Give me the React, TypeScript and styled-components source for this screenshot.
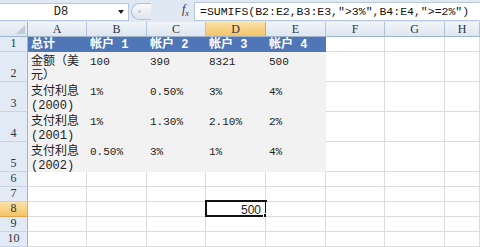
import React from "react";
import styled, { createGlobalStyle } from "styled-components";

const GlobalStyle = createGlobalStyle`
  html, body {
    margin: 0;
    padding: 0;
    background: #ffffff;
    overflow: hidden;
  }
`;

const Page = styled.div`
  width: 480px;
  height: 247px;
  display: flex;
  flex-direction: column;
  overflow: hidden;
`;

const FormulaBar = styled.div`
  height: 22px;
  display: flex;
  align-items: center;
  background: #dfe8f3;
  box-sizing: border-box;
  padding-top: 1px;
`;

const NameBox = styled.div`
  width: 129px;
  height: 18px;
  box-sizing: border-box;
  background: #ffffff;
  border: 1px solid #b7c8dd;
  border-left: none;
  display: flex;
  align-items: center;
  font: 12px/16px "Liberation Mono", monospace;
  color: #222;
`;

const NameText = styled.span`
  flex: 1;
  text-align: center;
  padding-left: 4px;
`;

const DropArrow = styled.span`
  width: 0;
  height: 0;
  margin-right: 4px;
  border-left: 3px solid transparent;
  border-right: 3px solid transparent;
  border-top: 4px solid #222;
`;

const Splitter = styled.div`
  width: 20px;
  height: 17px;
  margin-left: 2px;
  box-sizing: border-box;
  border: 1px solid #b3c1d3;
  border-right: none;
  border-radius: 9px 0 0 9px;
  background: linear-gradient(#f7f9fc, #dfe6ef);
  display: flex;
  align-items: center;
  padding-left: 6px;

  &::before {
    content: "";
    width: 3px;
    height: 3px;
    border-radius: 50%;
    background: #c3ccd8;
  }
`;

const FxLabel = styled.span`
  margin-left: 31px;
  width: 11px;
  font: italic 12px/16px "Liberation Serif", serif;
  color: #333;
  sub {
    font-size: 8px;
  }
`;

const FormulaInput = styled.div`
  flex: 1;
  height: 19px;
  margin-left: 1px;
  box-sizing: border-box;
  background: #ffffff;
  border: 1px solid #b7c8dd;
  border-right: none;
  padding-left: 5px;
  font: 11.5px/17px "Liberation Mono", monospace;
  color: #111;
  white-space: nowrap;
`;

const Sheet = styled.div`
  flex: 1;
  display: grid;
  grid-template-columns: 28px 59px 60px 59px 60px 60px 59px 60px 1fr;
  grid-template-rows: 15px 15px 30px 30px 30px 30px 15px 15px 15px 15px 15px;
`;

const Corner = styled.div`
  position: relative;
  box-sizing: border-box;
  background: linear-gradient(#eef3f9, #dce5f0);
  border-right: 1px solid #9fb3cb;
  border-bottom: 1px solid #9fb3cb;

  &::after {
    content: "";
    position: absolute;
    right: 2px;
    bottom: 2px;
    border-left: 9px solid transparent;
    border-bottom: 9px solid #bfcbd9;
  }
`;

const ColHead = styled.div<{ active?: boolean }>`
  box-sizing: border-box;
  display: flex;
  align-items: center;
  justify-content: center;
  background: ${(p) =>
    p.active
      ? "linear-gradient(#fbe2a8, #f3c469)"
      : "linear-gradient(#f1f5fa, #dde6f0)"};
  border-right: 1px solid ${(p) => (p.active ? "#e2a74a" : "#b0c2d6")};
  border-bottom: 1px solid #9fb3cb;
  font: 12px/14px "Liberation Serif", serif;
  color: #2b3440;
`;

const RowHead = styled.div<{ active?: boolean }>`
  box-sizing: border-box;
  display: flex;
  align-items: flex-end;
  justify-content: center;
  padding-bottom: 1px;
  background: ${(p) =>
    p.active ? "linear-gradient(#fbe2a8, #f3c469)" : "#e1eaf5"};
  border-right: 1px solid #9fb3cb;
  border-bottom: 1px solid ${(p) => (p.active ? "#e2a74a" : "#c6d4e4")};
  font: 12px/14px "Liberation Serif", serif;
  color: #2b3440;
`;

type CellKind = "head" | "fill" | "plain";

const cellColor = (kind: CellKind) =>
  kind === "head" ? "#4f76b6" : kind === "fill" ? "#f2f2f2" : "#ffffff";

const Cell = styled.div<{ kind: CellKind; num?: boolean }>`
  position: relative;
  box-sizing: border-box;
  padding: ${(p) => (p.kind === "head" ? "1px" : "3px")} 1px 0 3px;
  background: ${(p) => cellColor(p.kind)};
  border-right: 1px solid
    ${(p) => (p.kind === "plain" ? "#dadcdf" : cellColor(p.kind))};
  border-bottom: 1px solid
    ${(p) => (p.kind === "plain" ? "#dadcdf" : cellColor(p.kind))};
  font-family: "Liberation Mono", "Noto Sans CJK SC", monospace;
  font-weight: ${(p) => (p.kind === "head" ? 700 : 400)};
  font-size: ${(p) => (p.num ? "11px" : "12px")};
  line-height: 14px;
  color: ${(p) => (p.kind === "head" ? "#ffffff" : "#222222")};
`;

const Selected = styled(Cell)`
  padding: 1px 4px 0 0;
  text-align: right;
  font: 12px/14px "Liberation Sans", sans-serif;

  &::before {
    content: "";
    position: absolute;
    top: -2px;
    left: -1px;
    right: -2px;
    bottom: -1px;
    border: 2px solid #111;
  }

  &::after {
    content: "";
    position: absolute;
    right: -4px;
    bottom: -3px;
    width: 5px;
    height: 5px;
    background: #111;
    border: 1px solid #fff;
    border-bottom: none;
    border-right: none;
  }
`;

const columns = ["A", "B", "C", "D", "E", "F", "G", "H"];

const tableData: string[][] = [
  ["总计", "帐户 1", "帐户 2", "帐户 3", "帐户 4"],
  ["金额（美元）", "100", "390", "8321", "500"],
  ["支付利息(2000)", "1%", "0.50%", "3%", "4%"],
  ["支付利息(2001)", "1%", "1.30%", "2.10%", "2%"],
  ["支付利息(2002)", "0.50%", "3%", "1%", "4%"],
];

const rowCount = 10;

function App() {
  const rows = [];
  for (let r = 1; r <= rowCount; r++) {
    const data = tableData[r - 1];
    rows.push(
      <RowHead key={"rh" + r} active={r === 8}>
        {r}
      </RowHead>
    );
    columns.forEach((c, ci) => {
      if (r === 8 && c === "D") {
        rows.push(
          <Selected key={c + r} kind="plain">
            500
          </Selected>
        );
        return;
      }
      const inTable = !!data && ci < 5;
      const kind: CellKind = inTable ? (r === 1 ? "head" : "fill") : "plain";
      rows.push(
        <Cell key={c + r} kind={kind} num={inTable && r > 1 && ci > 0}>
          {inTable ? data[ci] : ""}
        </Cell>
      );
    });
  }

  return (
    <Page>
      <GlobalStyle />
      <FormulaBar>
        <NameBox>
          <NameText>D8</NameText>
          <DropArrow />
        </NameBox>
        <Splitter />
        <FxLabel>
          f<sub>x</sub>
        </FxLabel>
        <FormulaInput>
          =SUMIFS(B2:E2,B3:E3,"&gt;3%",B4:E4,"&gt;=2%")
        </FormulaInput>
      </FormulaBar>
      <Sheet>
        <Corner />
        {columns.map((c) => (
          <ColHead key={c} active={c === "D"}>
            {c}
          </ColHead>
        ))}
        {rows}
      </Sheet>
    </Page>
  );
}

export default App;
